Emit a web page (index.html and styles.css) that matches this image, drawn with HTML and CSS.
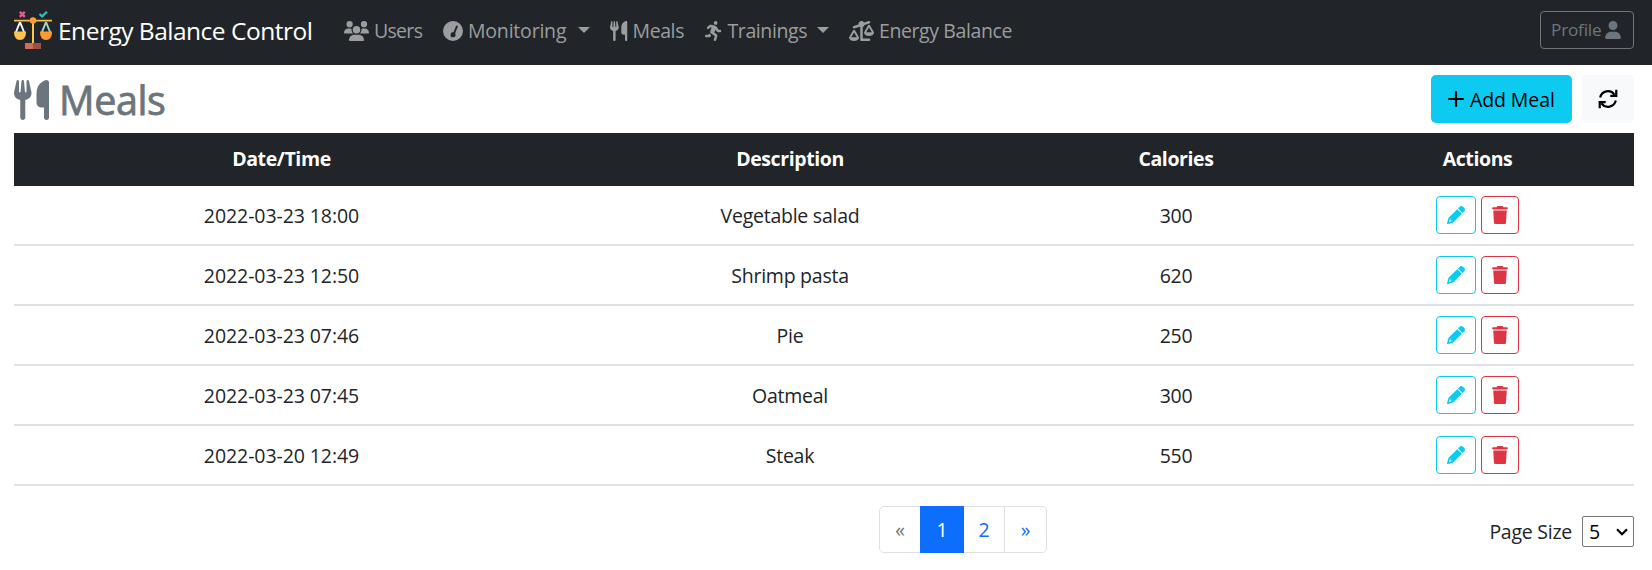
FILE: index.html
```html
<!DOCTYPE html>
<html lang="en">
<head>
<meta charset="utf-8">
<title>Energy Balance Control</title>
<link rel="stylesheet" href="styles.css">
</head>
<body>
<svg class="sprite" width="0" height="0" aria-hidden="true">
  <symbol id="utensils" viewBox="0 0 448 512"><path d="M416 0C400 0 288 32 288 176V288c0 35.3 28.7 64 64 64h32V480c0 17.7 14.3 32 32 32s32-14.3 32-32V352 240 32c0-17.7-14.3-32-32-32zM64 16C64 7.8 57.9 1 49.7 .1S34.2 4.6 32.4 12.5L2.1 148.8C.7 155.1 0 161.5 0 167.9c0 45.9 35.1 83.6 80 87.7V480c0 17.7 14.3 32 32 32s32-14.3 32-32V255.6c44.9-4.1 80-41.8 80-87.7c0-6.4-.7-12.8-2.1-19.1L191.6 12.5c-1.8-8-9.3-13.3-17.4-12.4S160 7.8 160 16V150.2c0 5.4-4.4 9.8-9.8 9.8c-5.1 0-9.3-3.9-9.8-9L127.9 14.6C127.2 6.3 120.3 0 112 0s-15.2 6.3-15.9 14.6L83.7 151c-.5 5.1-4.7 9-9.8 9c-5.4 0-9.8-4.4-9.8-9.8V16z"/></symbol>
  <symbol id="pencil" viewBox="0 0 512 512"><path d="M421.7 220.3L188.5 453.4L154.6 419.5L158.1 416H112C103.2 416 96 408.8 96 400V353.9L92.51 357.4C87.78 362.2 84.31 368 82.42 374.4L59.44 452.6L137.6 429.6C143.1 427.7 149.8 424.2 154.6 419.5L188.5 453.4C178.1 463.8 165.2 471.5 151.1 475.6L30.77 511C22.35 513.5 13.24 511.2 7.03 504.1C.8198 498.8-1.502 489.7 .976 481.2L36.37 360.9C40.53 346.8 48.16 333.9 58.57 323.5L291.7 90.34L421.7 220.3zM492.7 58.75C517.7 83.74 517.7 124.3 492.7 149.3L444.3 197.7L314.3 67.72L362.7 19.32C387.7-5.678 428.3-5.678 453.3 19.32L492.7 58.75z"/></symbol>
  <symbol id="trash" viewBox="0 0 448 512"><path d="M135.2 17.69C140.6 6.848 151.7 0 163.8 0H284.2C296.3 0 307.4 6.848 312.8 17.69L320 32H416C433.7 32 448 46.33 448 64C448 81.67 433.7 96 416 96H32C14.33 96 0 81.67 0 64C0 46.33 14.33 32 32 32H128L135.2 17.69zM31.1 128H416L394.8 466.1C393.3 492.3 372.3 512 346.9 512H101.1C75.7 512 54.7 492.3 53.2 466.1z"/></symbol>
</svg>

<nav class="navbar">
  <a class="brand">
    <svg class="logo" viewBox="0 0 38 38">
      <path d="M5.800.8l5 5M10.800.8l-5 5" stroke="#f5548e" stroke-width="2.4"/>
      <path d="M25.5 3l2.6 2.4L33 .8" fill="none" stroke="#20c4c0" stroke-width="2.2"/>
      <path d="M6 11L2 21M6 11l4 10" stroke="#f1f6f4" stroke-width="2" fill="none"/>
      <path d="M32 11l-4 10M32 11l4 10" stroke="#a9cfc9" stroke-width="2" fill="none"/>
      <path d="M0 9.700h38" stroke="#f3bd49" stroke-width="1.800"/>
      <path d="M19 10v22" stroke="#fcc64f" stroke-width="2"/>
      <circle cx="19" cy="9.500" r="3.200" fill="#ff9e30"/>
      <path d="M0 20.500h12c0 5.500-2 8.500-6 8.500s-6-3-6-8.500z" fill="#ffc250"/>
      <path d="M26 20.500h12c0 5.500-2 8.500-6 8.500s-6-3-6-8.500z" fill="#ff9a2e"/>
      <path d="M11 32h8v6h-8z" fill="#c9705a"/><path d="M19 32h8v6h-8z" fill="#9f513f"/>
    </svg>
    <span class="brand-text">Energy Balance Control</span>
  </a>
  <div class="links">
    <a class="link users"><svg class="icon wide" viewBox="0 0 640 512"><path d="M144 0a80 80 0 1 1 0 160A80 80 0 1 1 144 0zM512 0a80 80 0 1 1 0 160A80 80 0 1 1 512 0zM0 298.7C0 239.8 47.8 192 106.7 192h42.7c15.9 0 31 3.5 44.6 9.7c-1.3 7.2-1.9 14.7-1.9 22.3c0 38.2 16.8 72.5 43.3 96H21.3C9.6 320 0 310.4 0 298.7zM405.3 320c26.6-23.5 42.6-57.8 42.6-96c0-7.600-.7-15-1.9-22.300c13.600-6.300 28.700-9.700 44.600-9.700h42.700C592.200 192 640 239.800 640 298.700c0 11.800-9.600 21.300-21.300 21.300H405.300zM224 224a96 96 0 1 1 192 0 96 96 0 1 1-192 0zM128 485.300C128 411.700 187.700 352 261.300 352H378.700C452.300 352 512 411.700 512 485.300c0 14.700-11.900 26.700-26.700 26.700H154.700c-14.700 0-26.700-11.900-26.700-26.700z"/></svg><span>Users</span></a>
    <a class="link monitoring"><svg class="icon square" viewBox="0 0 512 512"><path fill-rule="evenodd" d="M256 0a256 256 0 1 0 0 512a256 256 0 1 0 0-512zM366 118c12 6 17 20 12 32L312 308c5 9 8 21 8 32a64 64 0 1 1-52-51L334 131c5-12 19-18 32-13z"/></svg><span>Monitoring</span><i class="caret"></i></a>
    <a class="link meals"><svg class="icon narrow"><use href="#utensils"/></svg><span>Meals</span></a>
    <a class="link trainings"><svg class="icon narrow" viewBox="0 0 448 512"><path d="M320 48a48 48 0 1 0 -96 0 48 48 0 1 0 96 0zM125.700 175.500c9.900-9.900 23.400-15.500 37.500-15.500c1.900 0 3.800 .1 5.600 .3L137.600 254c-9.300 28 1.700 58.800 26.800 74.500l86.200 53.900-25.400 88.800c-4.900 17 5 34.700 22 39.600s34.700-5 39.600-22l28.700-100.400c5.900-20.600-2.600-42.600-20.700-53.900L238 299l30.900-82.400 5.100 12.300C289 264.700 323.900 288 362.700 288H384c17.700 0 32-14.300 32-32s-14.300-32-32-32H362.700c-12.900 0-24.600-7.800-29.500-19.700l-6.300-15c-14.600-35.100-44.100-61.900-80.500-73.100l-48.700-15c-11.100-3.400-22.700-5.200-34.400-5.200c-31 0-60.800 12.300-82.700 34.300L57.400 153.400c-12.500 12.500-12.500 32.800 0 45.300s32.800 12.500 45.300 0l23.100-23.100zM91.200 352H32c-17.700 0-32 14.300-32 32s14.300 32 32 32h69.600c19 0 36.200-11.200 43.900-28.500L157 361.600l-9.500-6c-17.500-10.900-30.500-26.800-37.900-44.900L91.200 352z"/></svg><span>Trainings</span><i class="caret"></i></a>
    <a class="link balance"><svg class="icon wide" viewBox="0 0 640 512"><path d="M522.1 62.4c16.8-5.6 25.8-23.7 20.2-40.5S518.6-3.9 501.9 1.6l-113 37.7C375 15.8 349.3 0 320 0c-44.2 0-80 35.8-80 80c0 3 .2 5.9 .5 8.8L117.9 129.6c-16.8 5.6-25.8 23.700-20.200 40.500s23.700 25.800 40.500 20.200l135.500-45.200c4.500 3.200 9.300 5.900 14.400 8.200V480c0 17.700 14.300 32 32 32H512c17.700 0 32-14.300 32-32s-14.300-32-32-32H352V153.300c21-9.200 37.200-27 44.200-49l125.900-42zM439.600 288L512 163.800 584.400 288H439.600zM512 384c62.900 0 115.200-34 126-78.900c2.600-11-1-22.300-6.700-32.100L536.100 109.800c-5-8.600-14.200-13.800-24.100-13.800s-19.100 5.300-24.100 13.800L392.700 273.100c-5.700 9.800-9.300 21.100-6.700 32.100C396.800 350 449.100 384 512 384zM129.200 291.800L201.600 416H56.700l72.400-124.200zM3.200 433.100C14 478 66.300 512 129.200 512s115.200-34 126-78.900c2.600-11-1-22.300-6.700-32.100L153.200 237.800c-5-8.600-14.200-13.800-24.100-13.800s-19.100 5.300-24.100 13.800L9.900 401.100c-5.700 9.800-9.300 21.100-6.700 32.100z"/></svg><span>Energy Balance</span></a>
  </div>
  <button class="profile"><span>Profile</span><svg viewBox="0 0 448 512"><path d="M224 256c70.7 0 128-57.31 128-128s-57.3-128-128-128C153.300 0 96 57.310 96 128S153.300 256 224 256zM274.700 304H173.300C77.610 304 0 381.600 0 477.300c0 19.140 15.520 34.670 34.660 34.670h378.700C432.500 512 448 496.500 448 477.300C448 381.600 370.400 304 274.700 304z"/></svg></button>
</nav>

<main class="content">
  <header class="heading">
    <h1><svg class="title-icon"><use href="#utensils"/></svg><span>Meals</span></h1>
    <div class="tools">
      <button class="add"><svg viewBox="0 0 16 16"><path d="M8 1v14M1 8h14" stroke="#000" stroke-width="2.200" stroke-linecap="round"/></svg><span>Add Meal</span></button>
      <button class="refresh" aria-label="Refresh"><svg viewBox="0 0 20 20" fill="none" stroke="#000" stroke-width="2.200"><path d="M2.200 8.500A8 8 0 0 1 16.500 5.600M18.300.8v6h-6M17.800 11.500A8 8 0 0 1 3.500 14.400M1.700 19.200v-6h6"/></svg></button>
    </div>
  </header>

  <table class="meals-table">
    <colgroup><col class="c-date"><col class="c-desc"><col class="c-cal"><col class="c-act"></colgroup>
    <thead><tr><th>Date/Time</th><th>Description</th><th>Calories</th><th>Actions</th></tr></thead>
    <tbody>
      <tr><td class="date">2022-03-23 18:00</td><td>Vegetable salad</td><td>300</td><td><div class="actions"><button class="edit"><svg><use href="#pencil"/></svg></button><button class="delete"><svg><use href="#trash"/></svg></button></div></td></tr>
      <tr><td class="date">2022-03-23 12:50</td><td>Shrimp pasta</td><td>620</td><td><div class="actions"><button class="edit"><svg><use href="#pencil"/></svg></button><button class="delete"><svg><use href="#trash"/></svg></button></div></td></tr>
      <tr><td class="date">2022-03-23 07:46</td><td>Pie</td><td>250</td><td><div class="actions"><button class="edit"><svg><use href="#pencil"/></svg></button><button class="delete"><svg><use href="#trash"/></svg></button></div></td></tr>
      <tr><td class="date">2022-03-23 07:45</td><td>Oatmeal</td><td>300</td><td><div class="actions"><button class="edit"><svg><use href="#pencil"/></svg></button><button class="delete"><svg><use href="#trash"/></svg></button></div></td></tr>
      <tr><td class="date">2022-03-20 12:49</td><td>Steak</td><td>550</td><td><div class="actions"><button class="edit"><svg><use href="#pencil"/></svg></button><button class="delete"><svg><use href="#trash"/></svg></button></div></td></tr>
    </tbody>
  </table>

  <footer class="footer">
    <div class="pagination"><a class="page prev">«</a><a class="page current">1</a><a class="page two">2</a><a class="page next">»</a></div>
    <div class="page-size"><span>Page Size</span><div class="select"><span>5</span><svg viewBox="0 0 12 8"><path d="M1 1.200l5 5 5-5" fill="none" stroke="#000" stroke-width="2.200"/></svg></div></div>
  </footer>
</main>
</body>
</html>
```
FILE: styles.css
```css
* { box-sizing: border-box; }
body { margin: 0; background: #fff; color: #212529; font: 19.5px/30px "Open Sans", "Noto Sans", sans-serif; white-space: nowrap; }
.sprite { display: block; position: absolute; }
svg { flex: none; fill: currentColor; overflow: visible; }
button { font: inherit; margin: 0; padding: 0; display: flex; align-items: center; background: none; }

.navbar { display: flex; height: 65px; padding: 0 18px 5px 14px; align-items: center; background: #212529; }
.brand { display: flex; align-items: center; width: 330px; color: #fff; font-size: 24.500px; }
.logo { width: 38px; height: 38px; margin-right: 8px; fill: none; }
.brand-text { letter-spacing: -0.5px; margin-top: 2px; margin-left: -2px; }
.links { display: flex; flex: 1; color: #9b9d9e; }
.link { display: flex; align-items: center; margin-top: 2px; }
.link span { letter-spacing: -0.4px; }
.icon { height: 20px; margin-right: 5px; }
.wide { width: 25px; }
.square { width: 20px; }
.narrow { width: 17.5px; }
.users { width: 99px; }
.users span { letter-spacing: -0.7px; }
.monitoring { width: 167px; }
.monitoring span { letter-spacing: -0.2px; }
.meals { width: 95px; }
.trainings { width: 144px; }
.monitoring { padding-right: 20px; }
.trainings { padding-right: 20px; }
.caret { margin-left: auto; margin-bottom: 3px; border: 6px solid transparent; border-top-color: currentColor; border-bottom: 0; }
.profile { width: 94px; height: 38px; padding: 0 10px 0 10px; justify-content: space-between; border: 1px solid #6c757d; border-radius: 4px; color: #6c757d; font-size: 17.200px; }
.profile span { letter-spacing: -0.2px; }
.profile svg { width: 18px; height: 18px; margin-right: 1px; }

.content { padding: 10px 18px 0 14px; }
.heading { display: flex; justify-content: space-between; height: 58px; }
h1 { display: flex; height: 50px; margin: 0; align-items: center; color: #6c757d; font-size: 39.500px; font-weight: 500; letter-spacing: -0.4px; -webkit-text-stroke: 0.8px #6c757d; }
.title-icon { width: 35px; height: 40px; margin-right: 10px; }
.tools { display: flex; gap: 10px; }
.add { width: 141px; height: 48px; padding-left: 17px; gap: 6px; border: 0; border-radius: 5px; background: #0dcaf0; color: #000; letter-spacing: -0.1px; }
.add svg { width: 16px; height: 16px; }
.add span { padding-top: 1px; }
.refresh { width: 52px; height: 48px; justify-content: center; border: 0; border-radius: 5px; background: #f8f9fa; }
.refresh svg { width: 20px; height: 20px; fill: none; }

.meals-table { width: 1620px; table-layout: fixed; border-collapse: separate; border-spacing: 0; text-align: center; }
.c-date { width: 535px; }
.c-desc { width: 482px; }
.c-cal { width: 290px; }
.c-act { width: 313px; }
th { height: 53px; padding: 0 0 1px; background: #212529; color: #fff; font-weight: 700; letter-spacing: -0.4px; }
td { height: 60px; padding: 1px 0 0; border-bottom: 2px solid #dee2e6; letter-spacing: -0.25px; }
.date { letter-spacing: -0.08px; }
.actions { display: flex; justify-content: center; gap: 5px; margin-top: -1px; }
.edit, .delete { height: 38px; justify-content: center; border: 1px solid; border-radius: 4px; }
.edit { width: 40px; color: #0dcaf0; }
.delete { width: 38px; color: #dc3545; }
.edit svg { width: 18px; height: 18px; }
.delete svg { width: 16px; height: 18px; }

.footer { display: flex; justify-content: space-between; padding: 20px 0 0 865px; }
.pagination { display: flex; width: 168px; height: 47px; border: 1px solid #dee2e6; border-radius: 5px; color: #0d6efd; }
.page { display: flex; align-items: center; justify-content: center; }
.prev { width: 40px; color: #6c757d; }
.current { width: 44px; margin: -1px 0; background: #0d6efd; color: #fff; }
.two { width: 41px; border-right: 1px solid #dee2e6; }
.next { flex: 1; }
.page-size { display: flex; height: 31px; margin-top: 10px; align-items: center; gap: 10px; letter-spacing: -0.25px; }
.page-size span { padding-top: 1px; }
.select { display: flex; width: 52px; height: 31px; padding: 0 5px 0 6px; align-items: center; justify-content: space-between; border: 1px solid #767676; border-radius: 2px; color: #000; }
.select svg { width: 12px; height: 8px; }
```
